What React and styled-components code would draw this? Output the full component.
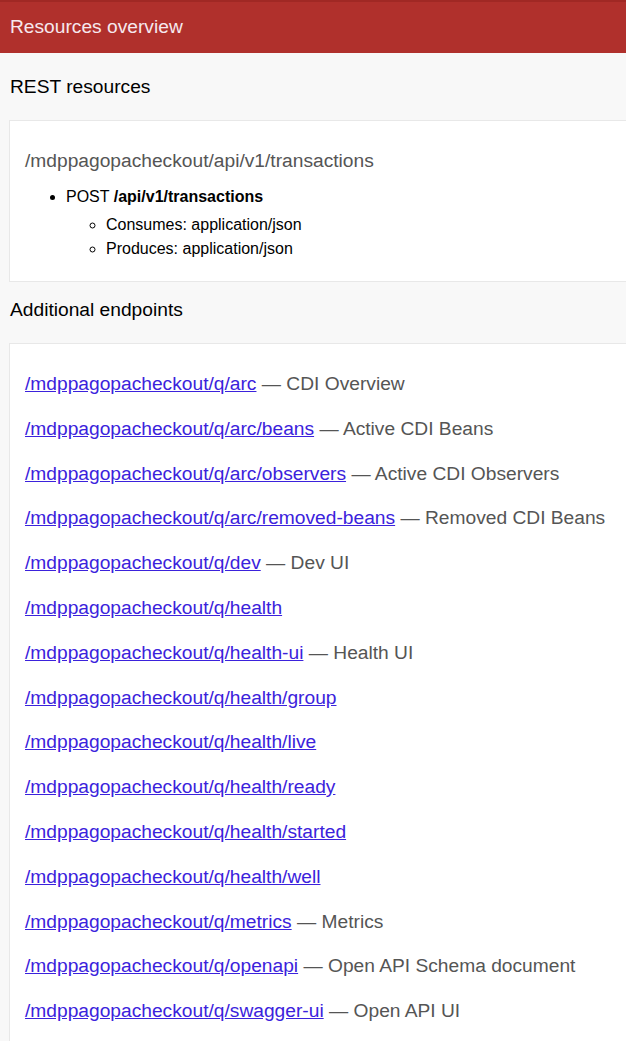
import React from 'react';
import styled, { createGlobalStyle } from 'styled-components';

const endpoints = [
  { path: '/mdppagopacheckout/q/arc', desc: 'CDI Overview' },
  { path: '/mdppagopacheckout/q/arc/beans', desc: 'Active CDI Beans' },
  { path: '/mdppagopacheckout/q/arc/observers', desc: 'Active CDI Observers' },
  { path: '/mdppagopacheckout/q/arc/removed-beans', desc: 'Removed CDI Beans' },
  { path: '/mdppagopacheckout/q/dev', desc: 'Dev UI' },
  { path: '/mdppagopacheckout/q/health' },
  { path: '/mdppagopacheckout/q/health-ui', desc: 'Health UI' },
  { path: '/mdppagopacheckout/q/health/group' },
  { path: '/mdppagopacheckout/q/health/live' },
  { path: '/mdppagopacheckout/q/health/ready' },
  { path: '/mdppagopacheckout/q/health/started' },
  { path: '/mdppagopacheckout/q/health/well' },
  { path: '/mdppagopacheckout/q/metrics', desc: 'Metrics' },
  { path: '/mdppagopacheckout/q/openapi', desc: 'Open API Schema document' },
  { path: '/mdppagopacheckout/q/swagger-ui', desc: 'Open API UI' },
];

const App = () => {
  return (
    <>
      <GlobalStyle />
      <Header>
        <Title>Resources overview</Title>
      </Header>
      <SectionTitle top={21} bottom={20}>REST resources</SectionTitle>
      <Card top={27} bottom={20}>
        <ResourcePath>/mdppagopacheckout/api/v1/transactions</ResourcePath>
        <MethodList>
          <li>
            POST <strong>/api/v1/transactions</strong>
            <MediaList>
              <li>Consumes: application/json</li>
              <li>Produces: application/json</li>
            </MediaList>
          </li>
        </MethodList>
      </Card>
      <SectionTitle top={15} bottom={20}>Additional endpoints</SectionTitle>
      <Card top={27} bottom={19}>
        {endpoints.map(item => (
          <Endpoint key={item.path}>
            <a href="#">{item.path}</a>
            {item.desc && <span> — {item.desc}</span>}
          </Endpoint>
        ))}
      </Card>
    </>
  );
};

const GlobalStyle = createGlobalStyle`
  html, body {
    margin: 0;
    padding: 0;
  }
  body {
    background: #f8f8f8;
    font-family: "Liberation Sans", Arial, sans-serif;
    overflow-x: hidden;
    color: #000;
  }
`;

const Header = styled.header`
  display: flex;
  align-items: center;
  height: 51px;
  padding-left: 10px;
  background: #b0302c;
  border-top: 2px solid #a02824;
`;

const Title = styled.h1`
  margin: 0 0 1px;
  font-size: 19.2px;
  font-weight: 400;
  line-height: 26px;
  color: #f6e8ee;
`;

const SectionTitle = styled.h2`
  margin: 0;
  padding: ${props => props.top}px 0 ${props => props.bottom}px 10px;
  font-size: 19.2px;
  font-weight: 400;
  line-height: 26px;
`;

const Card = styled.div`
  margin-left: 9px;
  padding: ${props => props.top}px 15px ${props => props.bottom}px;
  background: #fff;
  border: 1px solid #e8e8e8;
  border-right: none;
`;

const ResourcePath = styled.div`
  font-size: 19.2px;
  line-height: 26px;
  color: #555;
`;

const MethodList = styled.ul`
  margin: 11px 0 0;
  padding-left: 41px;
  font-size: 16px;
  line-height: 24px;
  list-style: disc;
`;

const MediaList = styled.ul`
  margin: 4px 0 0;
  padding-left: 40px;
  list-style: circle;
`;

const Endpoint = styled.p`
  margin: 0;
  height: 44.8px;
  font-size: 19.2px;
  line-height: 26px;

  a {
    color: #3b22dc;
    text-decoration: underline;
  }
  span {
    color: #555;
  }
`;

export default App;
